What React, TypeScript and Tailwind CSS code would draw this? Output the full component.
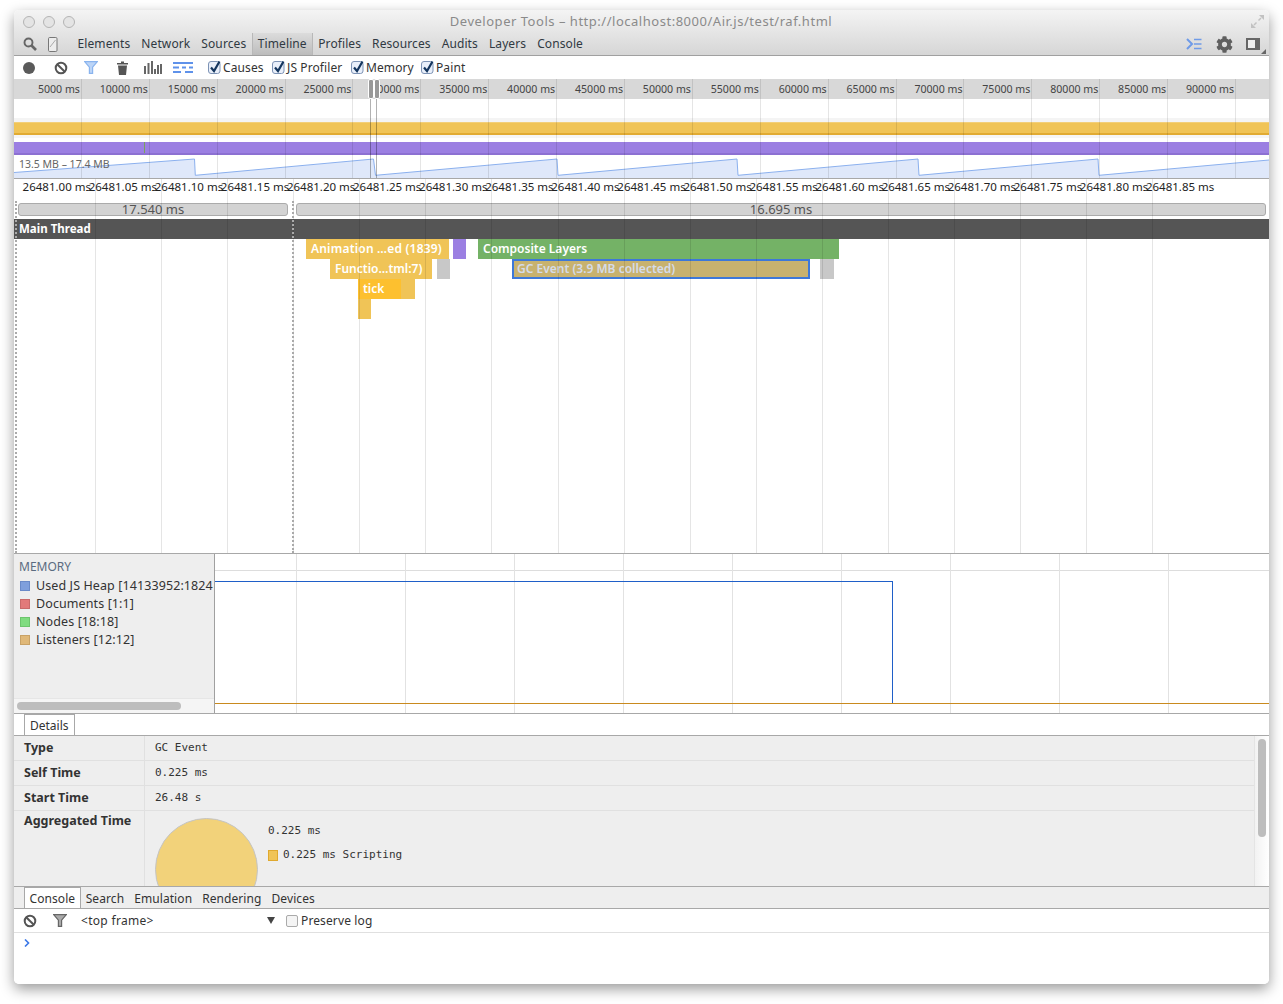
import React from 'react';
import { FaCog } from 'react-icons/fa';

const NAV = ['Elements', 'Network', 'Sources', 'Timeline', 'Profiles', 'Resources', 'Audits', 'Layers', 'Console'];
const RULER = Array.from({ length: 18 }, (_, i) => `${(i + 1) * 5000} ms`);
const TIMES = ['00', '05', '10', '15', '20', '25', '30', '35', '40', '45', '50', '55', '60', '65', '70', '75', '80', '85'].map(
  (t) => `26481.${t} ms`,
);
const MEM_GRID = [0, 1, 2, 3, 4, 5, 6, 7, 8];
const LEGEND = [
  { label: 'Used JS Heap [14133952:1824', color: 'bg-[#7f9fdc] border-[#6a8ac8]' },
  { label: 'Documents [1:1]', color: 'bg-[#e27a7a] border-[#c96a6a]' },
  { label: 'Nodes [18:18]', color: 'bg-[#7fdc7f] border-[#6cc56c]' },
  { label: 'Listeners [12:12]', color: 'bg-[#e0b878] border-[#c9a266]' },
];

const HEAP_POINTS =
  '0,17.5 180.5,4 181.3,20.3 359.5,4 361.5,20.3 543,4 544,20.3 723,4 724,20.3 904,4 905,20.3 1084,4 1085,20.3 1255,5';

const Check = () => (
  <svg width="14" height="15" viewBox="0 0 14 15" className="shrink-0">
    <rect x="0.5" y="1.5" width="11.5" height="12" rx="2.5" fill="#e9effa" stroke="#7d93b5" />
    <path d="M3 7.5 L6 11 L11.5 1.5" fill="none" stroke="#14365f" strokeWidth="2.2" />
  </svg>
);

const BanIcon = () => (
  <svg width="14" height="14" viewBox="0 0 14 14">
    <circle cx="7" cy="7" r="5.3" fill="none" stroke="#555" strokeWidth="2" />
    <path d="M3.2 3.2 L10.8 10.8" stroke="#555" strokeWidth="2" />
  </svg>
);

const FilterIcon = ({ fill, stroke }: { fill: string; stroke: string }) => (
  <svg width="14" height="13" viewBox="0 0 14 13">
    <path d="M0.7 0.7 H13.3 L8.6 6.2 V12.3 H5.4 V6.2 Z" fill={fill} stroke={stroke} strokeWidth="1.2" />
  </svg>
);

function TitleBar() {
  return (
    <div className="flex h-[23px] items-center relative">
      <div className="flex gap-[8px] pl-[9px] pt-[1px]">
        <span className="w-[12px] h-[12px] rounded-full border border-[#b4b4b4] bg-[#e4e4e4]" />
        <span className="w-[12px] h-[12px] rounded-full border border-[#b4b4b4] bg-[#e4e4e4]" />
        <span className="w-[12px] h-[12px] rounded-full border border-[#b4b4b4] bg-[#e4e4e4]" />
      </div>
      <div className="flex-1 text-center text-[13px] text-[#8a8a8a] pr-[43px] whitespace-nowrap tracking-[0.52px]">
        Developer Tools – http://localhost:8000/Air.js/test/raf.html
      </div>
      <svg width="15" height="15" viewBox="0 0 15 15" className="mr-[4px] mt-[-1px]">
        <path d="M9 1 H14 V6 Z M1 9 V14 H6 Z" fill="#c2c2c2" />
        <path d="M11 4 L8.5 6.5 M4 11 L6.5 8.5" stroke="#c2c2c2" strokeWidth="1.5" />
      </svg>
    </div>
  );
}

function NavBar() {
  return (
    <div className="flex h-[22px] items-center relative">
      <svg width="14" height="14" viewBox="0 0 14 14" className="ml-[9px]">
        <circle cx="5.5" cy="5.5" r="4" fill="none" stroke="#666" strokeWidth="1.9" />
        <path d="M8.5 8.5 L13 13" stroke="#666" strokeWidth="2.6" />
      </svg>
      <svg width="10" height="15" viewBox="0 0 10 15" className="ml-[11px]">
        <rect x="0.5" y="0.5" width="8.5" height="14" rx="1.2" fill="#ececec" stroke="#777" />
        <path d="M2 10 L7.5 3" stroke="#aaa" />
      </svg>
      <div className="flex h-full items-center ml-[14px] text-[#303942] text-[12px] tracking-[0.1px]">
        {NAV.map((n) =>
          n === 'Timeline' ? (
            <div
              key={n}
              className="h-[22px] px-[5px] flex items-center border-x border-[#b8b8b8] bg-gradient-to-b from-[#dcdcdc] to-[#bcbcbc] text-[#303942]"
            >
              {n}
            </div>
          ) : (
            <div key={n} className="px-[5.5px] h-full flex items-center">
              {n}
            </div>
          ),
        )}
      </div>
      <div className="flex-1" />
      <svg width="16" height="12" viewBox="0 0 16 12">
        <path d="M1 1 L6 6 L1 11" fill="none" stroke="#6f9be8" strokeWidth="2" />
        <path d="M8 1.5 H15.5 M8 6 H15.5 M8 10.5 H15.5" stroke="#6f9be8" strokeWidth="1.6" />
      </svg>
      <FaCog className="ml-[14px] w-[17px] h-[17px] text-[#5f5f5f]" />
      <svg width="14" height="12" viewBox="0 0 14 12" className="ml-[13px]">
        <rect x="1" y="1" width="12" height="10" fill="#eee" stroke="#666" strokeWidth="2" />
        <rect x="9" y="1" width="4" height="10" fill="#666" />
      </svg>
      <svg width="5" height="5" viewBox="0 0 5 5" className="ml-[1px] mr-[3px] mt-[14px]">
        <path d="M5 0 V5 H0 Z" fill="#666" />
      </svg>
    </div>
  );
}

function TimelineToolbar() {
  return (
    <div className="flex h-[23px] items-center text-[12px] text-[#333] bg-white tracking-[0.1px]">
      <span className="ml-[9px] w-[12px] h-[12px] rounded-full bg-[#5a5a5a]" />
      <span className="ml-[19px] flex">
        <BanIcon />
      </span>
      <span className="ml-[16px] flex">
        <FilterIcon fill="#bcd5f7" stroke="#8ab4ee" />
      </span>
      <svg width="11" height="14" viewBox="0 0 11 14" className="ml-[19px]">
        <path d="M0 2 H4 V0.5 H7 V2 H11 V3.5 H0 Z M1 4.5 H10 L9 14 H2 Z" fill="#555" />
      </svg>
      <svg width="18" height="13" viewBox="0 0 18 13" className="ml-[16px]">
        <path
          d="M1 5 V13 M4.5 2 V13 M8 0 V13 M11 8 V13 M14 4 V13 M17 3 V13"
          stroke="#666"
          strokeWidth="2"
          fill="none"
        />
      </svg>
      <svg width="20" height="11" viewBox="0 0 20 11" className="ml-[11px]">
        <path
          d="M0 1 H20 M0 5.5 H6 M9 5.5 H13 M16 5.5 H20 M0 10 H8 M12 10 H20"
          stroke="#5f92ea"
          strokeWidth="2"
          fill="none"
        />
      </svg>
      <div className="flex items-center ml-[15px] gap-[1px] w-[64px]">
        <Check />
        <span>Causes</span>
      </div>
      <div className="flex items-center gap-[1px] w-[79px]">
        <Check />
        <span>JS Profiler</span>
      </div>
      <div className="flex items-center gap-[1px] w-[70px]">
        <Check />
        <span>Memory</span>
      </div>
      <div className="flex items-center gap-[1px]">
        <Check />
        <span>Paint</span>
      </div>
    </div>
  );
}

function Overview() {
  return (
    <div className="relative">
      <div className="flex h-[20px] bg-[#d8d8d8] text-[10.6px] text-[#444]">
        {RULER.map((r) => (
          <div key={r} className="w-[67.9px] shrink-0 flex items-center justify-end pr-[2px] pt-[1px] whitespace-nowrap">
            {r}
          </div>
        ))}
      </div>
      <div className="h-[19px] bg-white" />
      <div className="h-[4px] bg-[#f4f4f4]" />
      <div className="h-[13px] bg-[#f0c457] border-t border-[#f3cf78] border-b-2 border-b-[#e1ab33]" />
      <div className="h-[3px] bg-[#f6f6f6]" />
      <div className="h-[4px] bg-white" />
      <div className="h-[13px] bg-[#9b7fe2] border-b-2 border-b-[#8c70d2] relative">
        <span className="absolute left-[130px] top-0 w-px h-full bg-[#7aa35e]" />
      </div>
      <div className="h-[23px] bg-white relative">
        <svg viewBox="0 0 1255 23" className="w-full h-[23px] block">
          <polygon points={`${HEAP_POINTS} 1255,23 0,23`} fill="#dfe8fa" />
          <polyline points={HEAP_POINTS} fill="none" stroke="#8bb0ee" strokeWidth="1" />
        </svg>
        <span className="absolute left-[5px] top-[2px] text-[10.5px] text-[#666] leading-[14px] whitespace-nowrap">
          13.5 MB – 17.4 MB
        </span>
      </div>
      <div className="h-px bg-[#a8a8a8]" />

      {/* grid lines over the overview */}
      <div className="absolute inset-x-0 top-0 bottom-px flex pointer-events-none">
        {RULER.map((r) => (
          <div key={r} className="w-[67.9px] shrink-0 border-r border-black/10" />
        ))}
      </div>

      {/* selection window */}
      <span className="absolute left-[354px] top-0 w-[6px] h-[20px] rounded-[2px] bg-[#999] border border-white" />
      <span className="absolute left-[360px] top-0 w-[6px] h-[20px] rounded-[2px] bg-[#999] border border-white" />
      <span className="absolute left-[356px] top-[20px] w-px h-[79px] bg-black/30" />
      <span className="absolute left-[362px] top-[20px] w-px h-[79px] bg-black/30" />
    </div>
  );
}

function FlameChart() {
  return (
    <div className="relative">
      <div className="flex h-[22px] items-start text-[11.5px] leading-[16px] text-[#222] bg-white">
        {TIMES.map((t, i) => (
          <div
            key={t}
            className={
              i === 0
                ? 'w-[82px] shrink-0 flex justify-end pr-[5px] whitespace-nowrap'
                : 'w-[66.08px] shrink-0 flex justify-end pr-[5px] whitespace-nowrap'
            }
          >
            {t}
          </div>
        ))}
      </div>
      <div className="flex h-[18px] pt-[2px] pb-[3px] pl-[4px] pr-[3px] gap-[8px] bg-white">
        <div className="w-[270px] rounded-[3px] border border-[#ababab] bg-[#d3d3d3] text-[13px] leading-[11px] text-center text-[#555]">
          17.540 ms
        </div>
        <div className="flex-1 rounded-[3px] border border-[#ababab] bg-[#d3d3d3] text-[13px] leading-[11px] text-center text-[#555]">
          16.695 ms
        </div>
      </div>
      <div className="h-[20px] bg-[#555] text-white text-[11.5px] font-bold flex items-center pl-[5px]">Main Thread</div>

      <div className="relative h-[314px] bg-white text-[12px] text-white font-semibold overflow-hidden">
        <div className="absolute left-[292px] top-0 w-[143px] h-[20px] bg-[#f0c457] flex items-center pl-[5px] whitespace-nowrap tracking-[0.2px]">
          Animation …ed (1839)
        </div>
        <div className="absolute left-[439px] top-0 w-[13px] h-[20px] bg-[#9b7fe2]" />
        <div className="absolute left-[464px] top-0 w-[361px] h-[20px] bg-[#74b266] flex items-center pl-[5px]">
          Composite Layers
        </div>
        <div className="absolute left-[316px] top-[20px] w-[102px] h-[20px] bg-[#f0c457] flex items-center pl-[5px] whitespace-nowrap">
          Functio…tml:7)
        </div>
        <div className="absolute left-[423px] top-[20px] w-[13px] h-[20px] bg-[#c8c8c8]" />
        <div className="absolute left-[498px] top-[20px] w-[298px] h-[20px] bg-[#c8b26e] border-2 border-[#3d78d8] flex items-center pl-[3px] text-[#d5dcea] whitespace-nowrap">
          GC Event (3.9 MB collected)
        </div>
        <div className="absolute left-[806px] top-[20px] w-[14px] h-[20px] bg-[#c8c8c8]" />
        <div className="absolute left-[344px] top-[40px] w-[57px] h-[20px] bg-[#f0c457]" />
        <div className="absolute left-[344px] top-[40px] w-[43px] h-[20px] bg-[#fdc02f] flex items-center pl-[5px]">
          tick
        </div>
        <div className="absolute left-[344px] top-[60px] w-[13px] h-[20px] bg-[#f0c457]" />
      </div>

      {/* grid lines over the chart */}
      <div className="absolute inset-0 flex pointer-events-none">
        {TIMES.map((t, i) => (
          <div
            key={t}
            className={
              i === 0
                ? 'w-[82px] shrink-0 border-r border-black/10'
                : 'w-[66.08px] shrink-0 border-r border-black/10 last:border-r-0'
            }
          />
        ))}
      </div>

      {/* frame dividers */}
      <div className="absolute left-[1px] top-[22px] bottom-0 border-l-2 border-dotted border-[#aaa]" />
      <div className="absolute left-[278px] top-[22px] bottom-0 border-l-2 border-dotted border-[#aaa]" />
    </div>
  );
}

function MemoryPanel() {
  return (
    <div className="flex h-[160px] border-t border-[#a8a8a8]">
      <div className="w-[201px] shrink-0 bg-[#eee] border-r border-[#a0a0a0] flex flex-col overflow-hidden">
        <div className="pl-[5px] pt-[5px] h-[23px] text-[12px] text-[#5a6b80] leading-[16px]">MEMORY</div>
        {LEGEND.map((l) => (
          <div
            key={l.label}
            className="flex items-center h-[18px] pl-[6px] text-[12.5px] text-[#333] whitespace-nowrap tracking-[0.1px]"
          >
            <span className={`w-[10px] h-[10px] border shrink-0 ${l.color}`} />
            <span className="ml-[6px]">{l.label}</span>
          </div>
        ))}
        <div className="flex-1" />
        <div className="h-[15px] bg-[#f5f5f5] border-t border-[#e6e6e6] pl-[3px] pt-[3px]">
          <div className="w-[164px] h-[8px] rounded-full bg-[#bdbdbd]" />
        </div>
      </div>
      <div className="relative flex-1 bg-white overflow-hidden">
        <div className="h-[17px] border-b border-[#ddd]" />
        <div className="absolute inset-0 flex pointer-events-none">
          <div className="w-[82px] shrink-0 border-r border-[#e2e2e2]" />
          {MEM_GRID.slice(1).map((g) => (
            <div key={g} className="w-[109px] shrink-0 border-r border-[#e2e2e2]" />
          ))}
        </div>
        <div className="absolute left-0 top-[27px] w-[678px] h-[123px] border-t border-r border-[#1f5fc8]" />
        <div className="absolute left-0 right-0 top-[149px] h-px bg-[#c98a1e]" />
      </div>
    </div>
  );
}

function DetailRow({ label, value }: { label: string; value: string }) {
  return (
    <div className="flex h-[25px] border-b border-[#e0e0e0]">
      <div className="w-[131px] shrink-0 border-r border-[#e0e0e0] pl-[10px] pt-[4px] text-[12.5px] leading-[16px] font-bold text-[#333]">
        {label}
      </div>
      <div className="pl-[10px] pt-[5px] font-['DejaVu_Sans_Mono',monospace] text-[11px] leading-[14px] text-[#333] whitespace-pre">
        {value}
      </div>
    </div>
  );
}

function Details() {
  return (
    <>
      <div className="h-[23px] bg-white border-t border-[#a8a8a8] border-b border-b-[#a8a8a8] flex items-end pl-[10px]">
        <div className="h-[21px] border border-b-0 border-[#a8a8a8] px-[5px] pt-[1px] text-[12px] leading-[19px] text-[#333] bg-white">
          Details
        </div>
      </div>
      <div className="flex h-[150px] bg-[#eee] overflow-hidden">
        <div className="flex-1 min-w-0">
          <DetailRow label="Type" value="GC Event" />
          <DetailRow label="Self Time" value="0.225 ms" />
          <DetailRow label="Start Time" value="26.48 s" />
          <div className="flex h-[75px]">
            <div className="w-[131px] shrink-0 border-r border-[#e0e0e0] pl-[10px] pt-[2px] text-[12.5px] leading-[16px] font-bold text-[#333] whitespace-nowrap">
              Aggregated Time
            </div>
            <div className="flex pl-[10px] pt-[7px]">
              <div className="w-[103px] h-[103px] rounded-full bg-[#f2d27a] border border-[#c4c4c4] shrink-0" />
              <div className="ml-[10px] pt-[6px] font-['DejaVu_Sans_Mono',monospace] text-[11px] leading-[14px] text-[#333]">
                <div>0.225 ms</div>
                <div className="flex items-center mt-[10px]">
                  <span className="w-[10px] h-[11px] bg-[#f0c457] border border-[#e0a92f] mr-[5px]" />
                  0.225 ms Scripting
                </div>
              </div>
            </div>
          </div>
        </div>
        <div className="w-[15px] shrink-0 bg-gradient-to-r from-[#f2f2f2] to-white border-l border-[#e4e4e4] pl-[3px] pt-[3px]">
          <div className="w-[8px] h-[98px] rounded-full bg-[#bdbdbd]" />
        </div>
      </div>
    </>
  );
}

function Drawer() {
  return (
    <div className="flex-1 flex flex-col bg-white rounded-b-[5px] overflow-hidden">
      <div className="h-[23px] bg-[#eee] border-t border-[#a8a8a8] border-b border-b-[#a8a8a8] flex items-end pl-[10px] text-[12px] text-[#333] tracking-[0.08px]">
        <div className="h-[21px] border border-b-0 border-[#a8a8a8] bg-white px-[4.5px] pt-[1px] leading-[19px]">Console</div>
        <div className="flex items-center h-[20px] pt-[1px] gap-[10px] pl-[5px]">
          <span>Search</span>
          <span>Emulation</span>
          <span>Rendering</span>
          <span>Devices</span>
        </div>
      </div>
      <div className="h-[24px] flex items-center border-b border-[#e0e0e0] text-[12px] text-[#333] tracking-[0.12px]">
        <span className="ml-[9px] flex">
          <BanIcon />
        </span>
        <span className="ml-[16px] flex">
          <FilterIcon fill="#aaa" stroke="#666" />
        </span>
        <span className="ml-[14px] w-[186px] tracking-[0.3px]">&lt;top frame&gt;</span>
        <svg width="8" height="7" viewBox="0 0 8 7">
          <path d="M0 0 H8 L4 7 Z" fill="#444" />
        </svg>
        <span className="ml-[11px] w-[12px] h-[12px] rounded-[2px] border border-[#aaa] bg-[#f4f4f4]" />
        <span className="ml-[3px]">Preserve log</span>
      </div>
      <div className="pl-[10px] pt-[6px]">
        <svg width="6" height="8" viewBox="0 0 6 8">
          <path d="M1 0.5 L4.5 4 L1 7.5" fill="none" stroke="#3b78e7" strokeWidth="1.6" />
        </svg>
      </div>
    </div>
  );
}

export default function App() {
  return (
    <div className="w-[1283px] h-[1004px] bg-white pt-[10px] pl-[14px] overflow-hidden font-['Noto_Sans',sans-serif]">
      <div className="w-[1255px] h-[974px] flex flex-col rounded-[5px] bg-white shadow-[0_5px_14px_rgba(0,0,0,0.4)]">
        <div className="h-[46px] rounded-t-[5px] bg-gradient-to-b from-[#f4f4f4] to-[#d6d6d6] border-b border-[#a0a0a0]">
          <TitleBar />
          <NavBar />
        </div>
        <TimelineToolbar />
        <Overview />
        <FlameChart />
        <MemoryPanel />
        <Details />
        <Drawer />
      </div>
    </div>
  );
}
